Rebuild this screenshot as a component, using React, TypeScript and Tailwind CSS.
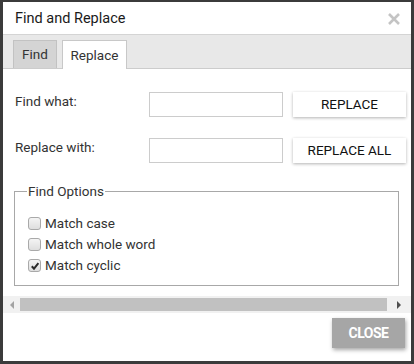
import React from "react";

function Checkbox({ checked }: { checked?: boolean }) {
  return (
    <span className="w-[13px] h-[13px] rounded-[3px] border border-[#a9a9a9] bg-[linear-gradient(#f4f4f4,#dedede)] flex items-center justify-center shrink-0">
      {checked && (
        <svg width="10" height="10" viewBox="0 0 10 10">
          <path d="M1.8 5.2 L4 7.6 L8.4 2.2" fill="none" stroke="#2a2a2a" strokeWidth="2" />
        </svg>
      )}
    </span>
  );
}

export default function App() {
  return (
    <div className="w-[414px] h-[364px] bg-[#3b3b3b] pt-[2px] pl-[3px] font-['Roboto',sans-serif] text-[#333]">
      <div className="w-[408px] h-[359px] bg-white flex flex-col">
        <div className="h-[33px] border-b border-[#d4d4d4] flex items-center justify-between pl-[12px] pr-[11px]">
          <span className="text-[14.5px] text-[#1a1a1a] leading-none mt-[2px]">Find and Replace</span>
          <svg width="12" height="12" viewBox="0 0 12 12" className="mt-[1px]">
            <path d="M1 1 L11 11 M11 1 L1 11" stroke="#c4c4c4" strokeWidth="2.6" />
          </svg>
        </div>
        <div className="h-[34px] bg-[#e8e8e8] border-b border-[#cccccc] flex items-end pl-[10px] gap-[5px]">
          <div className="w-[44px] h-[28px] bg-[#d4d4d4] border border-[#c2c2c2] border-b-0 flex items-center justify-center text-[13.5px]">
            Find
          </div>
          <div className="w-[65px] h-[29px] -mb-[1px] bg-white border border-[#c8c8c8] border-b-0 flex items-center justify-center text-[13.5px]">
            Replace
          </div>
        </div>
        <div className="pl-[12px] pt-[23px] flex flex-col">
          <div className="flex items-start h-[25px]">
            <span className="w-[134px] text-[13.5px] leading-[16px] pt-[1px]">Find what:</span>
            <div className="w-[134px] h-[25px] border border-[#cccccc]" />
            <button className="ml-[10px] w-[113px] h-[25px] bg-white text-[13.5px] text-[#111] shadow-[0_1px_3px_rgba(0,0,0,0.3)]">
              REPLACE
            </button>
          </div>
          <div className="flex items-start h-[25px] mt-[21px]">
            <span className="w-[134px] text-[13.5px] leading-[16px] pt-[1px]">Replace with:</span>
            <div className="w-[134px] h-[25px] border border-[#cccccc]" />
            <button className="ml-[10px] w-[113px] h-[25px] bg-white text-[13.5px] text-[#111] shadow-[0_1px_3px_rgba(0,0,0,0.3)]">
              REPLACE ALL
            </button>
          </div>
        </div>
        <fieldset className="mt-[20px] ml-[11px] w-[385px] border border-[#a8a8a8] pl-[12px] pb-[9px]">
          <legend className="px-[1px] text-[13.5px] leading-[16px]">Find Options</legend>
          <div className="flex flex-col pt-[14px]">
            {[
              ["Match case", false],
              ["Match whole word", false],
              ["Match cyclic", true],
            ].map(([label, checked]) => (
              <div key={label as string} className="h-[21px] flex items-center gap-[4px] ml-[1px]">
                <Checkbox checked={checked as boolean} />
                <span className="text-[13.5px]">{label as string}</span>
              </div>
            ))}
          </div>
        </fieldset>
        <div className="mt-[10px] h-[17px] bg-[#f1f1f1] flex items-center">
          <div className="w-[17px] h-[17px] flex items-center justify-center">
            <svg width="6" height="8" viewBox="0 0 6 8">
              <path d="M5 0 L1 4 L5 8 Z" fill="#a3a3a3" />
            </svg>
          </div>
          <div className="w-[367px] h-[13px] bg-[#c1c1c1]" />
          <div className="flex-1 flex items-center justify-center">
            <svg width="6" height="8" viewBox="0 0 6 8">
              <path d="M1 0 L5 4 L1 8 Z" fill="#505050" />
            </svg>
          </div>
        </div>
        <div className="flex justify-end pr-[6px] mt-[5px]">
          <button className="w-[73px] h-[30px] bg-[#a6a6a6] text-white font-bold text-[14px] tracking-[-0.5px] shadow-[1px_2px_4px_rgba(0,0,0,0.35)]">
            CLOSE
          </button>
        </div>
      </div>
    </div>
  );
}
